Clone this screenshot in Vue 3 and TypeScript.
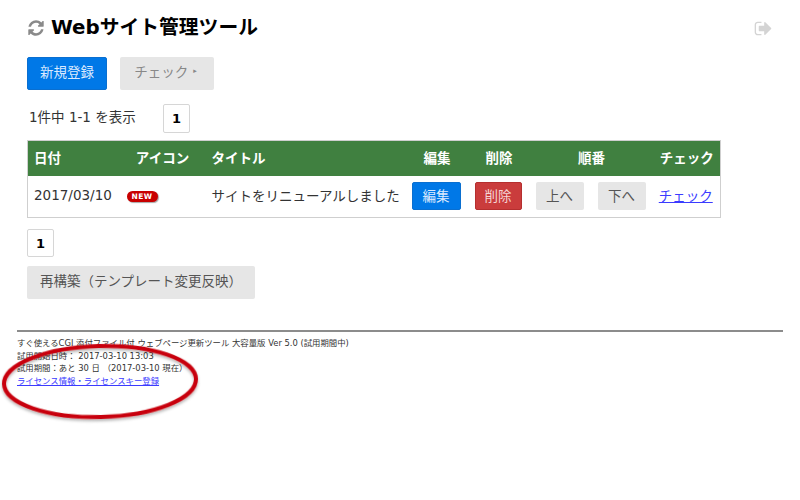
<script setup lang="ts">
const refreshPath = "M1639 1056q0 5-1 7-64 268-268 434.5t-478 166.5q-146 0-282.5-55t-243.5-157l-129 129q-19 19-45 19t-45-19-19-45v-448q0-26 19-45t45-19h448q26 0 45 19t19 45-19 45l-137 137q71 66 161 102t187 36q134 0 250-65t186-179q11-17 53-117 8-23 30-23h192q13 0 22.5 9.5t9.5 22.5zm25-800v448q0 26-19 45t-45 19h-448q-26 0-45-19t-19-45 19-45l138-138q-148-137-349-137-134 0-250 65t-186 179q-11 17-53 117-8 23-30 23h-199q-13 0-22.5-9.5t-9.5-22.5v-7q65-268 270-434.5t480-166.5q146 0 284 55.5t245 156.5l130-129q19-19 45-19t45 19 19 45z";
const signOutPath = "M704 1440q0 4 1 20t.5 26.5-3 23.5-10 19.5-20.5 6.5h-320q-119 0-203.5-84.5t-84.5-203.5v-704q0-119 84.5-203.5t203.5-84.5h320q13 0 22.5 9.5t9.5 22.5q0 4 1 20t.5 26.5-3 23.5-10 19.5-20.5 6.5h-320q-66 0-113 47t-47 113v704q0 66 47 113t113 47h312l11.5 1 11.5 3 8 5.5 7 9 2 13.5zm928-544q0 26-19 45l-544 544q-19 19-45 19t-45-19-19-45v-288h-448q-26 0-45-19t-19-45v-384q0-26 19-45t45-19h448v-288q0-26 19-45t45-19 45 19l544 544q19 19 19 45z";
const footerLines: string[] = [
  "すぐ使えるCGI 添付ファイル付 ウェブページ更新ツール 大容量版 Ver 5.0 (試用期間中)",
  "試用開始日時： 2017-03-10 13:03",
  "試用期間：あと 30 日 （2017-03-10 現在）",
];
</script>

<template>
  <div class="page">
    <main class="main">
      <header class="head">
        <h1 class="title">
          <svg class="refresh" viewBox="0 0 1792 1792"><path :d="refreshPath" /></svg>
          <span>Webサイト管理ツール</span>
        </h1>
        <svg class="logout" viewBox="0 0 1792 1792"><path :d="signOutPath" /></svg>
      </header>

      <div class="actions">
        <a class="btn blue big new-btn">新規登録</a>
        <a class="btn gray big check-btn">チェック<span class="caret">▸</span></a>
      </div>

      <div class="count-row">
        <span class="count">1件中 1-1 を表示</span>
        <span class="pager">1</span>
      </div>

      <table class="table">
        <colgroup>
          <col class="c1" /><col class="c2" /><col class="c3" /><col class="c4" />
          <col class="c5" /><col class="c6" /><col class="c7" />
        </colgroup>
        <thead>
          <tr>
            <th class="left">日付</th>
            <th>アイコン</th>
            <th class="left title-head">タイトル</th>
            <th>編集</th>
            <th>削除</th>
            <th>順番</th>
            <th>チェック</th>
          </tr>
        </thead>
        <tbody>
          <tr>
            <td>2017/03/10</td>
            <td><span class="new">NEW</span></td>
            <td class="title-cell">サイトをリニューアルしました</td>
            <td class="btn-cell"><a class="btn blue small edit">編集</a></td>
            <td class="btn-cell"><a class="btn red small del">削除</a></td>
            <td class="btn-cell">
              <div class="order">
                <a class="btn gray small">上へ</a>
                <a class="btn gray small">下へ</a>
              </div>
            </td>
            <td class="check-cell"><a class="link" href="#">チェック</a></td>
          </tr>
        </tbody>
      </table>

      <span class="pager lower">1</span>
      <a class="btn gray big rebuild">再構築（テンプレート変更反映）</a>
    </main>

    <footer class="footer">
      <div v-for="line in footerLines" :key="line" class="fline">{{ line }}</div>
      <div class="fline"><a class="link" href="#">ライセンス情報・ライセンスキー登録</a></div>
    </footer>

    <svg class="circle" viewBox="0 0 800 500">
      <defs>
        <filter id="soft" x="-10%" y="-20%" width="120%" height="140%">
          <feDropShadow dx="0" dy="2" stdDeviation="1.5" flood-color="#000" flood-opacity="0.3" />
        </filter>
      </defs>
      <ellipse cx="100" cy="381.5" rx="96" ry="35.5" transform="rotate(-1.5 100 381.5)" fill="none" stroke="#c8000c" stroke-width="4" filter="url(#soft)" />
    </svg>
  </div>
</template>

<style scoped>
.page {
  position: relative;
  width: 800px;
  height: 500px;
  overflow: hidden;
  background: #fff;
  color: #333;
  font-family: "DejaVu Sans", "Noto Sans CJK JP", sans-serif;
  font-size: 13.5px;
}
.main {
  display: flex;
  flex-direction: column;
  align-items: flex-start;
  padding: 13px 27px 0;
}
.head {
  width: 746px;
  display: flex;
  align-items: center;
  justify-content: space-between;
  height: 30px;
}
.title {
  display: flex;
  align-items: center;
  gap: 6px;
  margin: 0;
  font-size: 19.8px;
  line-height: 30px;
  font-weight: 700;
  color: #000;
}
.refresh {
  width: 18px;
  height: 18px;
  fill: #8a8a8a;
}
.logout {
  width: 19px;
  height: 19px;
  fill: #d4d4d4;
}
.actions {
  display: flex;
  gap: 13px;
  margin-top: 14px;
}
.btn {
  display: inline-flex;
  align-items: center;
  justify-content: center;
  box-sizing: border-box;
  border-radius: 2px;
  white-space: nowrap;
}
.big { height: 33px; padding-bottom: 5px; }
.small { height: 28px; width: 48px; padding-bottom: 2px; }
.blue { background: #0078e7; color: #dbeaff; border: 1px solid #0a6fd0; }
.red { background: #ca3c3c; color: #f5d5d5; border: 1px solid #b52f2f; }
.gray { background: #e6e6e6; color: #555; }
.new-btn { width: 80px; }
.check-btn { width: 94px; color: #888; padding-right: 3px; }
.caret { font-size: 7px; margin-left: 5px; }
.count-row {
  display: flex;
  align-items: center;
  margin-top: 14px;
  height: 29px;
}
.count { width: 136px; padding: 0 0 5px 2px; box-sizing: border-box; }
.pager {
  display: inline-flex;
  align-items: center;
  justify-content: center;
  box-sizing: border-box;
  width: 27px;
  height: 29px;
  border: 1px solid #d6d6d6;
  border-radius: 2px;
  background: #fff;
  color: #000;
  font-weight: 700;
  font-size: 13px;
}
.lower { margin-top: 11px; height: 28px; }
.table {
  width: 693px;
  margin-top: 7px;
  border-collapse: collapse;
  table-layout: fixed;
  border: 1px solid #cfcfcf;
}
.c1 { width: 93px; }
.c2 { width: 84px; }
.c3 { width: 201px; }
.c4 { width: 63px; }
.c5 { width: 61px; }
.c6 { width: 124px; }
.c7 { width: 67px; }
th {
  height: 35px;
  padding: 0 0 3px;
  box-sizing: border-box;
  background: #408040;
  color: #fff;
  font-weight: 700;
  font-size: 13.5px;
  text-align: center;
}
th.left { text-align: left; padding-left: 6px; }
th.title-head { padding-left: 7px; }
td {
  height: 42px;
  padding: 0 6px 2px;
  box-sizing: border-box;
  white-space: nowrap;
  color: #333;
}
td.title-cell { padding-left: 7px; }
td.btn-cell { padding-bottom: 0; }
td.check-cell { padding: 0 7px 2px 5px; text-align: center; }
.edit { width: 49px; }
.del { width: 47px; }
.order {
  display: flex;
  gap: 14px;
}
.new {
  display: inline-flex;
  align-items: center;
  justify-content: center;
  width: 31px;
  height: 11px;
  border-radius: 5.5px;
  background: #c80000;
  color: #fff;
  font-size: 7.5px;
  font-weight: 700;
  letter-spacing: 0.4px;
  box-shadow: 1px 1px 1px rgba(0, 0, 0, 0.35);
  vertical-align: middle;
}
.link { color: #3b3bff; text-decoration: underline; }
.rebuild {
  width: 228px;
  margin-top: 9px;
  color: #555;
}
.footer {
  margin: 31px 17px 0;
  padding-top: 5px;
  border-top: 2px solid #8c8c8c;
  font-size: 8.4px;
  line-height: 12.7px;
  color: #333;
}
.circle {
  position: absolute;
  left: 0;
  top: 0;
  width: 800px;
  height: 500px;
  pointer-events: none;
}
</style>
